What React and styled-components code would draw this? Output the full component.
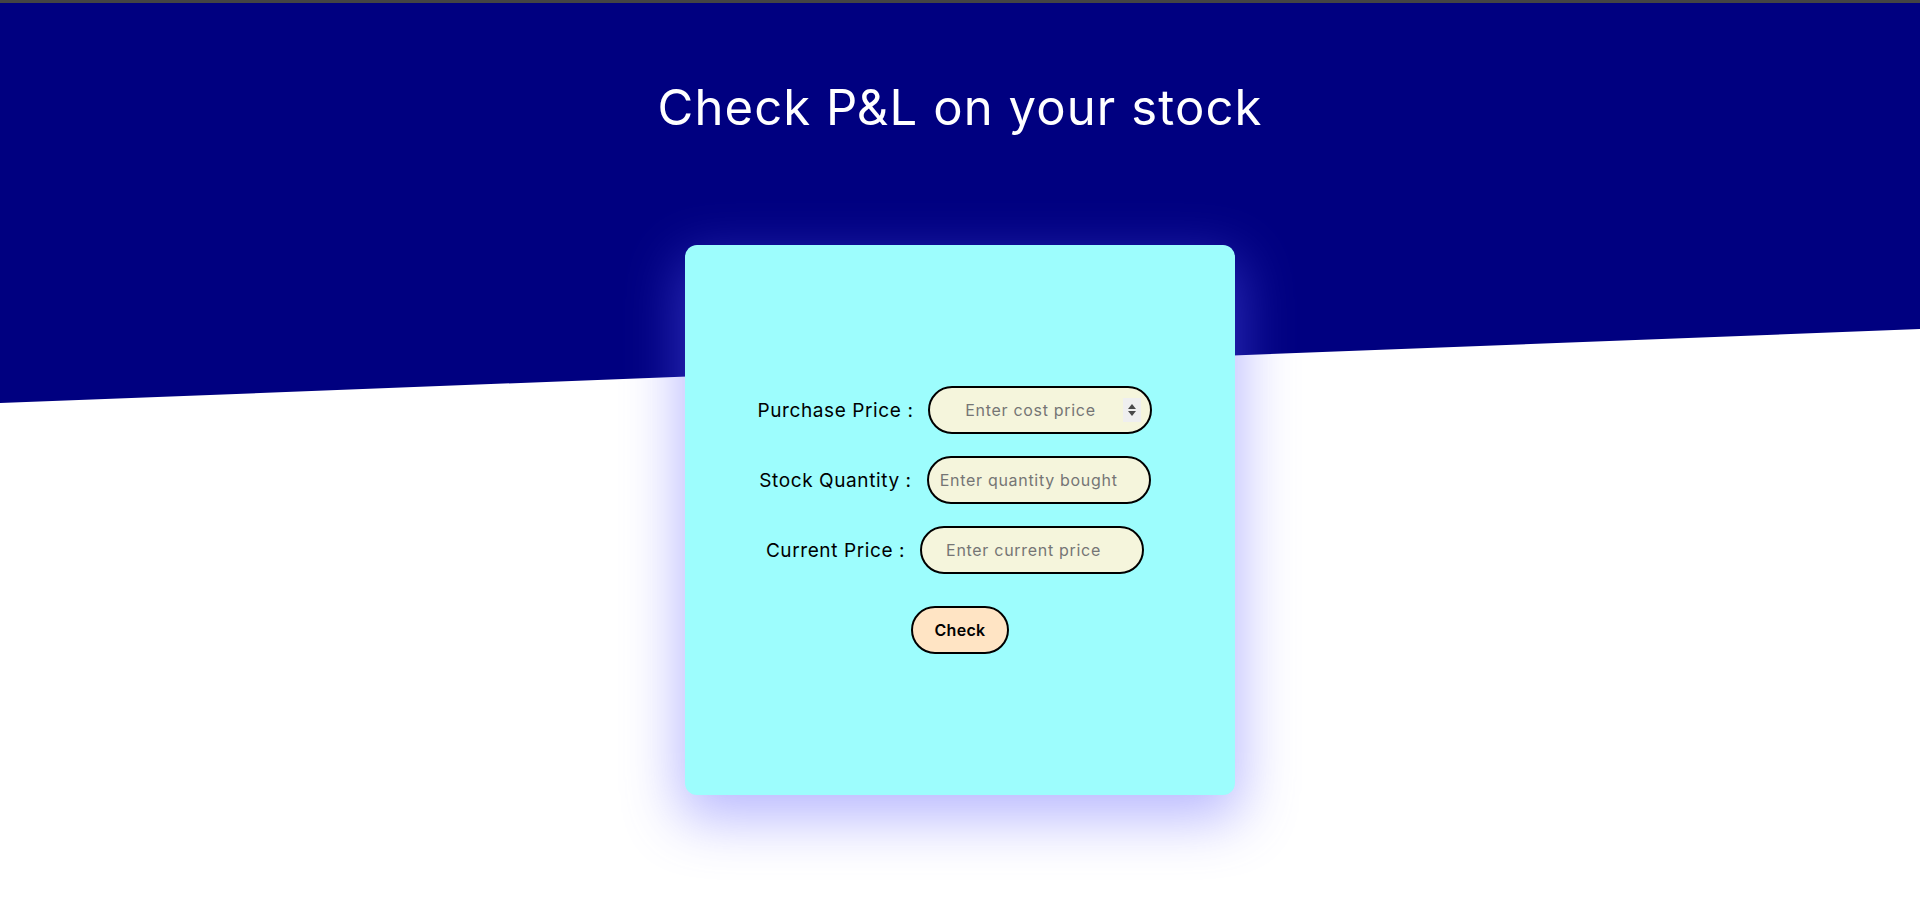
import React from 'react'
import styled, { createGlobalStyle } from 'styled-components'

const GlobalStyle = createGlobalStyle`
  html, body {
    margin: 0;
    padding: 0;
    background: #ffffff;
  }
  body {
    font-family: 'Inter', 'Liberation Sans', sans-serif;
  }
  * {
    box-sizing: border-box;
  }
`

const fields = [
  { label: 'Purchase Price :', placeholder: 'Enter cost price', type: 'number', align: 'center', indent: 10 },
  { label: 'Stock Quantity :', placeholder: 'Enter quantity bought', type: 'text', align: 'left', indent: 11 },
  { label: 'Current Price :', placeholder: 'Enter current price', type: 'text', align: 'left', indent: 24 },
]

const Stepper = () => (
  <StepBox>
    <svg width="10" height="14" viewBox="0 0 10 14">
      <path d="M5 1 L9 6 H1 Z" fill="#4a4a4a" />
      <path d="M5 13 L9 8 H1 Z" fill="#4a4a4a" />
    </svg>
  </StepBox>
)

export default function App() {
  return (
    <Page>
      <GlobalStyle />
      <TopBar />
      <Hero>
        <Title>Check P&amp;L on your stock</Title>
      </Hero>
      <Card>
        <Form onSubmit={e => e.preventDefault()}>
          {fields.map(f => (
            <Row key={f.label}>
              <Label>{f.label}</Label>
              <Field>
                <Input
                  type={f.type}
                  placeholder={f.placeholder}
                  align={f.align}
                  indent={f.indent}
                  spinner={f.type === 'number'}
                />
                {f.type === 'number' && <Stepper />}
              </Field>
            </Row>
          ))}
          <CheckButton type="submit">Check</CheckButton>
        </Form>
      </Card>
    </Page>
  )
}

const Page = styled.div`
  min-height: 905px;
  background: #ffffff;
  overflow: hidden;
`

const TopBar = styled.div`
  height: 4px;
  background: #444444;
  border-bottom: 1px solid #5c5c5c;
`

const Hero = styled.header`
  height: 400px;
  margin-top: -1px;
  background: #000080;
  clip-path: polygon(0 0, 100% 0, 100% 326px, 0 100%);
  display: flex;
  justify-content: center;
  padding-top: 76px;
`

const Title = styled.h1`
  margin: 0;
  color: #ffffff;
  font-size: 49px;
  font-weight: 400;
  line-height: 58px;
  letter-spacing: 1.1px;
`

const Card = styled.section`
  position: relative;
  z-index: 1;
  width: 550px;
  height: 550px;
  margin: -158px auto 0;
  background: #9dfdfd;
  border-radius: 12px;
  box-shadow: 0 18px 55px 6px rgba(100, 100, 255, 0.45);
  display: flex;
  align-items: center;
  justify-content: center;
`

const Form = styled.form`
  display: flex;
  flex-direction: column;
  align-items: center;
  gap: 22px;
  padding-right: 10px;
`

const Row = styled.div`
  display: flex;
  align-items: center;
  gap: 15px;
`

const Label = styled.label`
  font-size: 19px;
  letter-spacing: 0.6px;
  color: #000000;
  white-space: nowrap;
`

const Field = styled.div`
  position: relative;
  display: flex;
`

const Input = styled.input`
  width: 224px;
  height: 48px;
  border: 2px solid #000000;
  border-radius: 24px;
  background: #f5f5dc;
  font-family: inherit;
  font-size: 16px;
  letter-spacing: 0.7px;
  color: #222;
  text-align: ${p => p.align};
  padding: 0 ${p => (p.spinner ? 30 : 10)}px 0 ${p => p.indent}px;
  outline: none;
  -moz-appearance: textfield;

  &::placeholder {
    color: #757575;
  }

  &::-webkit-inner-spin-button,
  &::-webkit-outer-spin-button {
    -webkit-appearance: none;
    margin: 0;
  }
`

const StepBox = styled.span`
  position: absolute;
  right: 11px;
  top: 12px;
  width: 18px;
  height: 24px;
  background: #efefef;
  display: flex;
  align-items: center;
  justify-content: center;
  pointer-events: none;
`

const CheckButton = styled.button`
  margin-top: 10px;
  margin-left: 10px;
  width: 98px;
  height: 48px;
  border: 2px solid #000000;
  border-radius: 24px;
  background: #ffe4c4;
  font-family: inherit;
  font-size: 16px;
  font-weight: 600;
  letter-spacing: 0.3px;
  color: #000000;
  cursor: pointer;
`
